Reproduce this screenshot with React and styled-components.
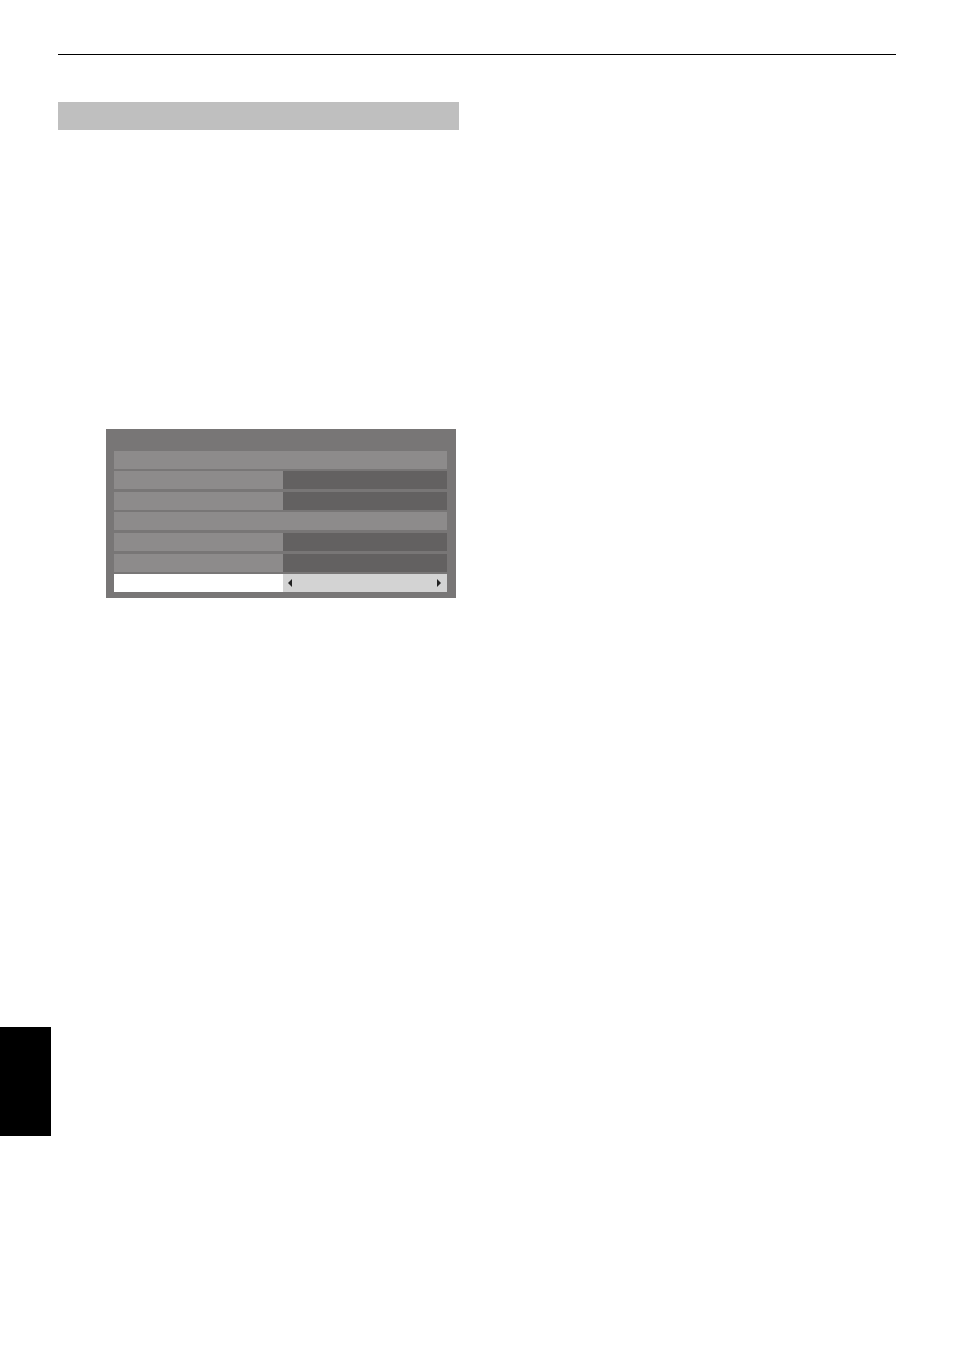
import React from 'react'
import styled, {createGlobalStyle} from 'styled-components'

const GlobalStyle = createGlobalStyle`
    html, body {
        margin: 0;
        padding: 0;
        background: #ffffff;
        font-family: "Liberation Sans", Arial, sans-serif;
    }
`

const Page = styled.div`
    position: relative;
    width: 954px;
    height: 1348px;
    padding-top: 54px;
    box-sizing: border-box;
`

const Rule = styled.div`
    margin-left: 58px;
    width: 838px;
    height: 1px;
    background: #000;
`

const SectionBar = styled.div`
    margin: 47px 0 0 58px;
    width: 401px;
    height: 28px;
    background: #bfbfbf;
`

const Menu = styled.div`
    margin: 299px 0 0 106px;
    width: 350px;
    box-sizing: border-box;
    padding: 22px 9px 6px 8px;
    background: #787676;
    display: flex;
    flex-direction: column;
`

const Row = styled.div`
    display: flex;
    height: 18px;
    margin-top: ${props => props.$gap}px;
`

const Cell = styled.div`
    height: 100%;
    width: ${props => props.$w};
    background: ${props => props.$bg};
    display: flex;
    align-items: center;
    justify-content: space-between;
    padding: 0 6px 0 5px;
    box-sizing: border-box;
`

const Arrow = styled.span`
    width: 0;
    height: 0;
    border-top: 4px solid transparent;
    border-bottom: 4px solid transparent;
    ${props => props.$dir === 'left'
        ? 'border-right: 4px solid #222;'
        : 'border-left: 4px solid #222;'}
`

const Tab = styled.div`
    position: absolute;
    left: 0;
    top: 1027px;
    width: 51px;
    height: 109px;
    background: #000;
`

const LIGHT = '#8d8b8b'
const DARK = '#636161'

const rows = [
    {gap: 0, type: 'full'},
    {gap: 2, type: 'pair'},
    {gap: 3, type: 'pair'},
    {gap: 2, type: 'full'},
    {gap: 3, type: 'pair'},
    {gap: 3, type: 'pair'},
    {gap: 2, type: 'active'},
]

export default function App() {
    return (
        <>
            <GlobalStyle />
            <Page>
                <Rule />
                <SectionBar />
                <Menu>
                    {rows.map((row, i) => {
                        if (row.type === 'full') {
                            return (
                                <Row key={i} $gap={row.gap}>
                                    <Cell $w="100%" $bg={LIGHT} />
                                </Row>
                            )
                        }
                        if (row.type === 'active') {
                            return (
                                <Row key={i} $gap={row.gap}>
                                    <Cell $w="169px" $bg="#ffffff" />
                                    <Cell $w="164px" $bg="#d3d3d3">
                                        <Arrow $dir="left" />
                                        <Arrow $dir="right" />
                                    </Cell>
                                </Row>
                            )
                        }
                        return (
                            <Row key={i} $gap={row.gap}>
                                <Cell $w="169px" $bg={LIGHT} />
                                <Cell $w="164px" $bg={DARK} />
                            </Row>
                        )
                    })}
                </Menu>
                <Tab />
            </Page>
        </>
    )
}
